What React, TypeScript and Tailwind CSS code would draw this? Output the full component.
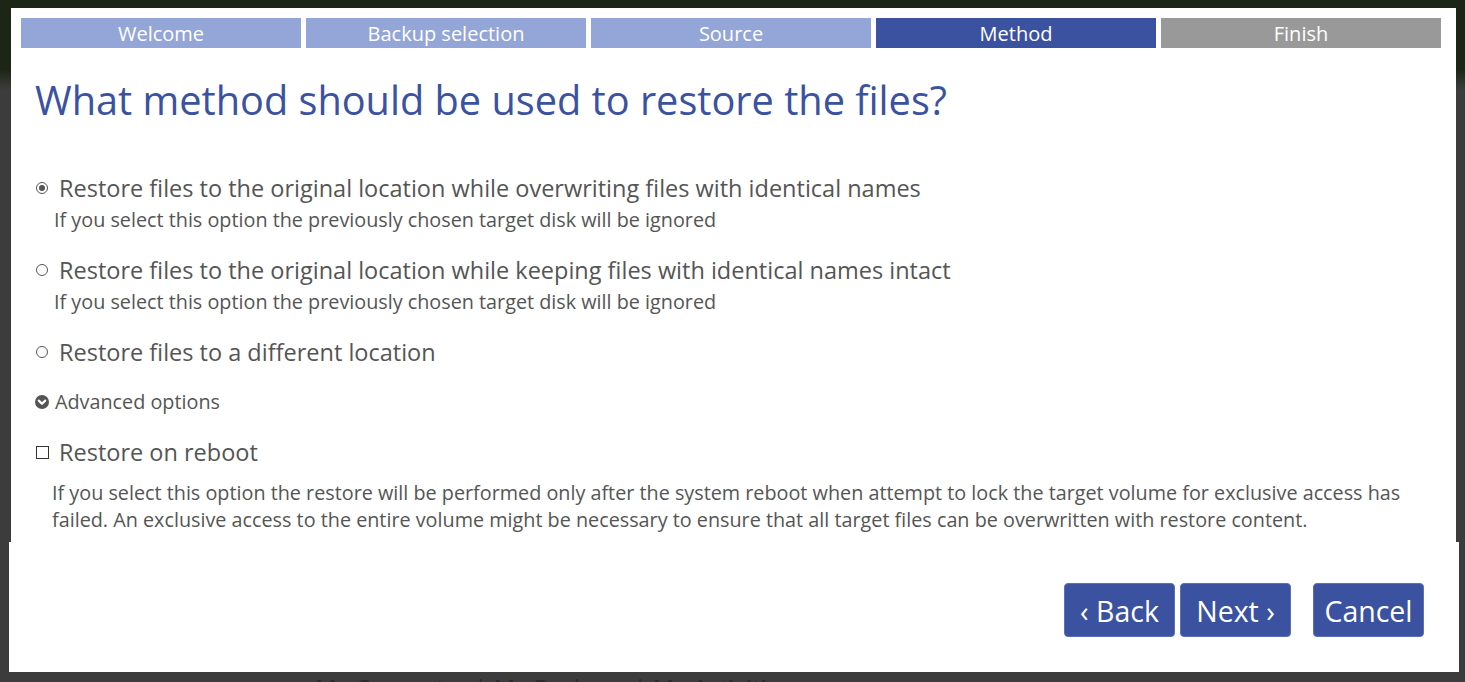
import React from "react";

const tabs = [
  { label: "Welcome", cls: "bg-[#94a5d7]" },
  { label: "Backup selection", cls: "bg-[#94a5d7]" },
  { label: "Source", cls: "bg-[#94a5d7]" },
  { label: "Method", cls: "bg-[#3b52a0]" },
  { label: "Finish", cls: "bg-[#999999]" },
];

function Radio({ checked }: { checked?: boolean }) {
  return (
    <span className="w-[12px] h-[12px] rounded-full border border-[#555] flex items-center justify-center shrink-0">
      {checked && <span className="w-[6px] h-[6px] rounded-full bg-[#555]" />}
    </span>
  );
}

export default function App() {
  return (
    <div
      className="w-[1465px] h-[682px] overflow-hidden bg-[linear-gradient(to_bottom,#1d2616_0px,#1d2616_70px,#3c3c3c_90px,#3c3c3c_100%)] pt-[8px]"
      style={{ fontFamily: '"Open Sans", "Noto Sans", sans-serif' }}
    >
      <div className="ml-[11px] w-[1445px] bg-white pt-[10px] pb-[9px]">
        <div className="flex gap-[5px] pl-[10px]">
          {tabs.map((t) => (
            <div
              key={t.label}
              className={`w-[280px] h-[30px] pt-[2px] flex items-center justify-center text-white text-[20px] ${t.cls}`}
            >
              {t.label}
            </div>
          ))}
        </div>
        <div className="pl-[24px] pr-[40px] text-[#555]">
          <h1 className="mt-[28px] text-[39.7px] leading-[48px] text-[#3b52a0]">
            What method should be used to restore the files?
          </h1>

          <div className="mt-[49px]">
            <div className="flex items-center h-[30px] pl-[1px]">
              <Radio checked />
              <span className="ml-[11px] mt-[2px] text-[23.5px]">
                Restore files to the original location while overwriting files with identical names
              </span>
            </div>
            <div className="mt-[5px] pl-[19px] text-[19.8px] leading-[24px]">
              If you select this option the previously chosen target disk will be ignored
            </div>
          </div>

          <div className="mt-[23px]">
            <div className="flex items-center h-[30px] pl-[1px]">
              <Radio />
              <span className="ml-[11px] mt-[2px] text-[23.5px]">
                Restore files to the original location while keeping files with identical names intact
              </span>
            </div>
            <div className="mt-[5px] pl-[19px] text-[19.8px] leading-[24px]">
              If you select this option the previously chosen target disk will be ignored
            </div>
          </div>

          <div className="mt-[23px] flex items-center h-[30px] pl-[1px]">
            <Radio />
            <span className="ml-[11px] mt-[2px] text-[23.5px]">Restore files to a different location</span>
          </div>

          <div className="mt-[23px] flex items-center h-[24px]">
            <svg width="14" height="14" viewBox="0 0 14 14" className="shrink-0">
              <circle cx="7" cy="7" r="7" fill="#555" />
              <path d="M3.8 5.6 L7 8.8 L10.2 5.6" stroke="#fff" strokeWidth="2.2" fill="none" strokeLinecap="round" strokeLinejoin="round" />
            </svg>
            <span className="ml-[6px] text-[19.8px]">Advanced options</span>
          </div>

          <div className="mt-[23px] flex items-center h-[30px] pl-[1px]">
            <span className="w-[13px] h-[13px] border border-[#333] shrink-0" />
            <span className="ml-[10px] mt-[2px] text-[23.5px]">Restore on reboot</span>
          </div>
          <div className="mt-[12px] pl-[17px] text-[19.8px] leading-[27px]">
            If you select this option the restore will be performed only after the system reboot when attempt to lock the target volume for exclusive access has failed. An exclusive access to the entire volume might be necessary to ensure that all target files can be overwritten with restore content.
          </div>
        </div>
      </div>

      <div className="ml-[9px] w-[1450px] h-[130px] bg-white flex justify-end items-start pt-[41px] pr-[35px]">
        <button className="w-[111px] h-[54px] pt-[2px] rounded-[4px] bg-[#3b52a0] border border-[#5a6fb5] text-white text-[28.5px] leading-none flex items-center justify-center">
          ‹ Back
        </button>
        <button className="ml-[5px] w-[111px] h-[54px] pt-[2px] rounded-[4px] bg-[#3b52a0] border border-[#5a6fb5] text-white text-[28.5px] leading-none flex items-center justify-center">
          Next ›
        </button>
        <button className="ml-[22px] w-[111px] h-[54px] pt-[2px] rounded-[4px] bg-[#3b52a0] border border-[#5a6fb5] text-white text-[28.5px] leading-none flex items-center justify-center">
          Cancel
        </button>
      </div>

      <div className="pl-[315px] pt-[1px] text-[24px] leading-[30px] text-[#2a2a2a] whitespace-nowrap">
        My Computer | My Backups | My Activities
      </div>
    </div>
  );
}
